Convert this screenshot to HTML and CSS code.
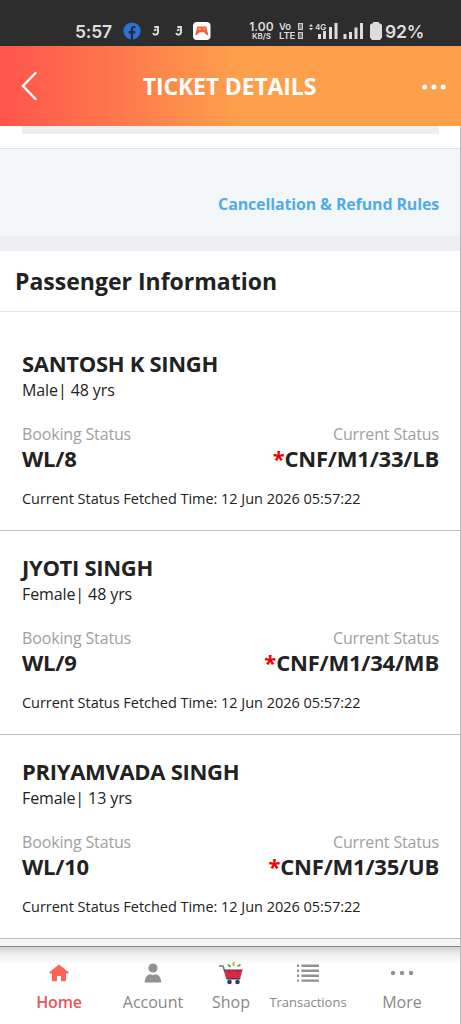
FILE: index.html
```html
<!DOCTYPE html>
<html lang="en">
<head>
<meta charset="utf-8">
<title>Ticket Details</title>
<link rel="stylesheet" href="styles.css">
</head>
<body>
<div class="status-bar">
  <span class="clock">5:57</span>
  <svg class="facebook" width="18" height="18" viewBox="0 0 18 18"><circle cx="9" cy="9" r="8.6" fill="#2a72d8"/><path d="M7.700 17.500v-6H5.600V9h2.100V7.300c0-2.200 1.300-3.400 3.200-3.400.7 0 1.400.1 1.600.2v2h-1.100c-1 0-1.300.6-1.300 1.300V9h2.300l-.4 2.500h-1.900v6z" fill="#26303d"/></svg>
  <svg class="app-j" width="10" height="12" viewBox="0 0 10 12"><path d="M7 1.200v6.300a2.600 2.600 0 0 1-5 .5M3.300 2h4.500M3 5.500l2.500-1.200" fill="none" stroke="#ddd" stroke-width="1.900"/></svg>
  <svg class="app-j second" width="10" height="12" viewBox="0 0 10 12"><path d="M7 1.200v6.300a2.600 2.600 0 0 1-5 .5M3.300 2h4.500M3 5.500l2.500-1.200" fill="none" stroke="#ddd" stroke-width="1.900"/></svg>
  <svg class="game" width="18" height="18" viewBox="0 0 18 18"><rect width="17.500" height="18" rx="4" fill="#fff"/><path d="M4.300 4.500h9l2 8.500c-2 1-3-1.500-4.200-2.700H6.500C5.300 11.500 4.300 14 2.300 13z" fill="#ed6540"/><path d="M5 7h3M10.500 7h2" stroke="#f9a17c" stroke-width="1.500"/></svg>
  <div class="stack speed"><b>1.00</b><small>KB/S</small></div>
  <div class="stack volte"><span>Vo<i class="sim"></i></span><span>LTE<i class="sim"></i></span></div>
  <svg class="signals" width="56" height="18" viewBox="0 0 56 18"><path d="M0 4.500 2 2l2 2.500zM0 6l2 2.500L4 6z" fill="#ddd"/><text x="6" y="7.500" class="net">4G</text><path d="M9 12h3v5H9zM14 9h3v8h-3zM20 5h3v12h-3zM25.500 1h3v16h-3zM34.500 12h3v5h-3zM40 10h3v7h-3zM45.500 5.500h3V17h-3zM51 1h3v16h-3z" fill="#ddd"/></svg>
  <svg class="battery" width="12" height="18" viewBox="0 0 12 18"><path d="M3 0h6v1.500h1.500L12 3v12.500L10 18H2l-2-2.500V3l1.500-1.500H3z" fill="#ddd"/></svg>
  <span class="percent">92%</span>
</div>
<header class="header">
  <svg width="16" height="28" viewBox="0 0 16 28"><path d="M14.500 1 2 14l12.500 13" fill="none" stroke="#fff" stroke-width="2.400" stroke-linecap="round"/></svg>
  <h1>TICKET DETAILS</h1>
  <svg class="more" width="24" height="6" viewBox="0 0 24 6" fill="#fff"><circle cx="2.700" cy="3" r="2.500"/><circle cx="12" cy="3" r="2.500"/><circle cx="21.300" cy="3" r="2.500"/></svg>
</header>
<main class="content">
  <div class="previous"><div class="bar"></div></div>
  <div class="rules"><a>Cancellation &amp; Refund Rules</a></div>
  <h2 class="section-title"><span>Passenger Information</span></h2>
  <div class="passengers">
    <section class="passenger">
      <h3>SANTOSH K SINGH</h3>
      <p class="person">Male| 48 yrs</p>
      <div class="row labels"><span>Booking Status</span><span>Current Status</span></div>
      <div class="row values"><span>WL/8</span><span><em>*</em>CNF/M1/33/LB</span></div>
      <p class="fetched">Current Status Fetched Time: 12 Jun 2026 05:57:22</p>
    </section>
    <section class="passenger">
      <h3>JYOTI SINGH</h3>
      <p class="person">Female| 48 yrs</p>
      <div class="row labels"><span>Booking Status</span><span>Current Status</span></div>
      <div class="row values"><span>WL/9</span><span><em>*</em>CNF/M1/34/MB</span></div>
      <p class="fetched">Current Status Fetched Time: 12 Jun 2026 05:57:22</p>
    </section>
    <section class="passenger">
      <h3>PRIYAMVADA SINGH</h3>
      <p class="person">Female| 13 yrs</p>
      <div class="row labels"><span>Booking Status</span><span>Current Status</span></div>
      <div class="row values"><span>WL/10</span><span><em>*</em>CNF/M1/35/UB</span></div>
      <p class="fetched">Current Status Fetched Time: 12 Jun 2026 05:57:22</p>
    </section>
  </div>
  <div class="gap"></div>
</main>
<nav class="tabs">
  <div class="tab active">
    <svg width="20" height="18" viewBox="0 0 20 18"><path d="M10 .5 19.500 8c.5.600 0 1.500-.8 1.500H17V16c0 .8-.5 1.300-1.300 1.300H12V12H8v5.300H4.300C3.500 17.300 3 16.800 3 16V9.500H1.300C.5 9.500 0 8.600.5 8z" fill="#ff6357"/></svg>
    <span>Home</span>
  </div>
  <div class="tab">
    <svg width="18" height="20" viewBox="0 0 18 20" fill="#929292"><circle cx="9" cy="5" r="4.600"/><path d="M.7 19.500c0-5 2.800-8 5.500-8.300 1.800 1 3.800 1 5.600 0 2.700.3 5.500 3.300 5.500 8.300z"/></svg>
    <span>Account</span>
  </div>
  <div class="tab shop">
    <svg width="26" height="24" viewBox="0 0 26 24"><path d="M1 5h4l4 13h13" fill="none" stroke="#727b7e" stroke-width="1.600"/><path d="M6 9h18.500L22 18H9z" fill="#dc2943"/><path d="M6 9h18.500M8.500 17.500h14M11 9l1 3M20.500 9l-1 3" fill="none" stroke="#703048" stroke-width="1"/><circle cx="11.500" cy="21" r="2.300" fill="#293d68"/><circle cx="19.500" cy="21" r="2.300" fill="#293d68"/><path d="m10 3.500 2.500 2.500M19.500 5.500l3-2" stroke="#68a04a" stroke-width="1.800"/><path d="M15.500 1v4" stroke="#e1aa37" stroke-width="2"/></svg>
    <span>Shop</span>
  </div>
  <div class="tab transactions">
    <svg width="22" height="18" viewBox="0 0 22 18"><path d="M0 1.800h2M0 6.800h2M0 11.800h2M0 16.600h2M4.500 1.800H22M4.500 6.800H22M4.500 11.800H22M4.500 16.600H22" stroke="#929292" stroke-width="2.400"/></svg>
    <span>Transactions</span>
  </div>
  <div class="tab">
    <svg width="24" height="6" viewBox="0 0 24 6" fill="#929292"><circle cx="3" cy="3" r="2.200"/><circle cx="12" cy="3" r="2.200"/><circle cx="21" cy="3" r="2.200"/></svg>
    <span>More</span>
  </div>
</nav>
</body>
</html>
```

FILE: styles.css
```css
* { box-sizing: border-box; }
body, h1, h2, h3, p { margin: 0; }
body {
  width: 461px;
  height: 1024px;
  overflow: hidden;
  display: flex;
  flex-direction: column;
  background: #fff;
  color: #222;
  font-family: "Open Sans", "Noto Sans", sans-serif;
}
svg { flex: none; display: block; }
span, a, h1, h2, h3, p { white-space: nowrap; }

.status-bar {
  height: 46px;
  flex: none;
  padding: 16px 0 0 75px;
  display: flex;
  align-items: center;
  background: #2d2d2d;
  color: #ddd;
  font-family: Inter, Roboto, sans-serif;
}
.clock { width: 48px; font-size: 17.500px; font-weight: 600; letter-spacing: -0.2px; }
.app-j { margin-left: 10px; }
.app-j.second { margin-left: 13px; }
.game { margin-left: 9px; }
.stack { display: flex; flex-direction: column; font-size: 10px; line-height: 9px; font-weight: 600; }
.speed { width: 27px; margin-left: 37px; align-items: center; }
.speed b { font-size: 12px; line-height: 10px; font-weight: 600; }
.speed small { font-size: 8px; line-height: 8px; }
.volte { margin-left: 4px; width: 24px; font-size: 9.500px; letter-spacing: -0.1px; }
.volte > span { display: flex; align-items: center; justify-content: space-between; }
.sim { width: 5px; height: 7px; border: 1.500px solid #ccc; background: #777; }
.signals { margin-left: 6px; }
.net { font: 600 8px Inter, sans-serif; fill: #ddd; }
.battery { margin-left: 5px; }
.percent { margin-left: 3px; font-size: 17.500px; font-weight: 600; letter-spacing: -0.2px; }

.header {
  height: 80px;
  flex: none;
  padding: 0 15px 0 21px;
  display: flex;
  align-items: center;
  justify-content: space-between;
  background: linear-gradient(90deg, #ff544c 0%, #fd774c 25%, #fea04b 52%, #fea04b 100%);
}
.header h1 { color: #fff; font-size: 23px; line-height: 30px; font-weight: 700; letter-spacing: -0.15px; }
.more { margin-top: 2px; }

.content { flex: none; border-right: 1px solid #bbb; }
.previous { height: 23px; padding: 0 21px 0 22px; border-bottom: 1px solid #e3e5e9; }
.bar { height: 8px; background: #eee; }
.rules {
  height: 102px;
  padding: 44px 21px 0 0;
  text-align: right;
  background: #f4f7fa;
  border-bottom: 15px solid #eeeef3;
}
.rules a { display: block; color: #50ace9; font-size: 16px; line-height: 22px; font-weight: 700; letter-spacing: -0.15px; }
.section-title { height: 61px; padding: 14px 15px 0; border-bottom: 1px solid #e4e4e4; font-size: 23px; line-height: 32px; font-weight: 700; }
.passengers { padding-top: 15px; }
.passenger { height: 204px; padding: 23px 21px 0 22px; border-bottom: 1px solid #bfbfbf; }
.passenger h3 { font-size: 22px; line-height: 26px; font-weight: 700; letter-spacing: -0.3px; }
.person { margin-top: 3px; font-size: 16px; line-height: 22px; letter-spacing: -0.1px; }
.row { display: flex; justify-content: space-between; }
.labels { margin-top: 22px; color: #a0a0a0; font-size: 16px; line-height: 22px; letter-spacing: -0.15px; }
.values { font-size: 22px; line-height: 26px; font-weight: 700; letter-spacing: -0.2px; }
.values em { color: #f00000; font-style: normal; }
.fetched { margin-top: 17px; font-size: 14.500px; line-height: 22px; letter-spacing: -0.03px; }
.gap { height: 8px; background: #f5f5f5; border-bottom: 1px solid #888; }

.tabs {
  flex: 1;
  display: grid;
  grid-template-columns: 94px 94px 62px 92px 96px;
  padding-left: 12px;
  border-right: 1px solid #bbb;
  background: linear-gradient(#d3d3d3 0, #f2f2f2 9px, #fff 18px);
}
.tab {
  display: grid;
  grid-template-rows: 28px 30px;
  align-content: start;
  align-items: center;
  justify-items: center;
  padding-top: 12px;
  color: #888;
  font-size: 16px;
  line-height: 24px;
}
.active { color: #e9575a; font-weight: 600; }
.active span { letter-spacing: -0.2px; }
.transactions span { font-size: 13px; }
```
